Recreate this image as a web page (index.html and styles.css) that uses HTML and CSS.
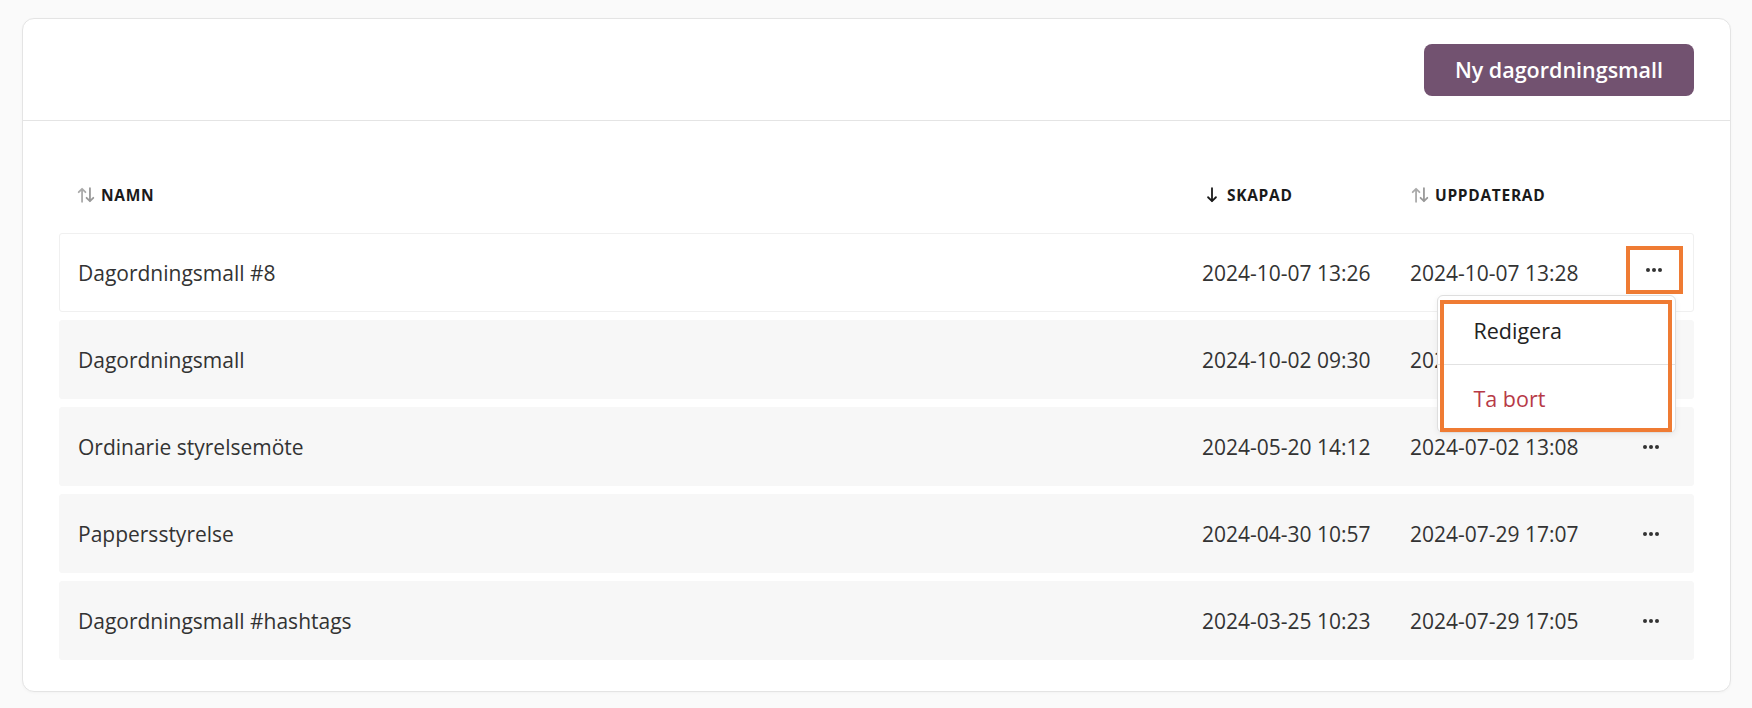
FILE: index.html
```html
<!DOCTYPE html>
<html lang="sv">
<head>
  <meta charset="UTF-8">
  <meta name="viewport" content="width=device-width, initial-scale=1">
  <title>Dagordningsmallar</title>
  <link rel="stylesheet" href="styles.css">
</head>
<body>
  <div class="card">
    <div class="card-header">
      <button class="primary">Ny dagordningsmall</button>
    </div>
    <div class="table">
      <div class="thead">
        <div class="th">
          <svg class="sort" viewBox="0 0 16 16"><path d="M4.5 14V2.5M1.5 5.5l3-3 3 3" stroke="#aaa"/><path d="M11.5 2v11.5M8.5 10.5l3 3 3-3" stroke="#999"/></svg>
          Namn
        </div>
        <div class="th">
          <svg class="sort" viewBox="0 0 16 16"><path d="M8 2v11.5M4.5 10l3.5 3.5 3.5-3.5" stroke="#1a1a1a"/></svg>
          Skapad
        </div>
        <div class="th">
          <svg class="sort" viewBox="0 0 16 16"><path d="M4.5 14V2.5M1.5 5.5l3-3 3 3" stroke="#aaa"/><path d="M11.5 2v11.5M8.5 10.5l3 3 3-3" stroke="#999"/></svg>
          Uppdaterad
        </div>
        <div></div>
      </div>

      <div class="row active">
        <div>Dagordningsmall #8</div>
        <div>2024-10-07 13:26</div>
        <div>2024-10-07 13:28</div>
        <div class="actions">
          <div class="menu-wrap">
            <button class="dots highlight"><span></span><span></span><span></span></button>
            <div class="menu">
              <div class="menu-item">Redigera</div>
              <div class="menu-item danger">Ta bort</div>
              <div class="menu-highlight"></div>
            </div>
          </div>
        </div>
      </div>

      <div class="row">
        <div>Dagordningsmall</div>
        <div>2024-10-02 09:30</div>
        <div>2024-10-02 09:31</div>
        <div class="actions"><button class="dots"><span></span><span></span><span></span></button></div>
      </div>

      <div class="row">
        <div>Ordinarie styrelsemöte</div>
        <div>2024-05-20 14:12</div>
        <div>2024-07-02 13:08</div>
        <div class="actions"><button class="dots"><span></span><span></span><span></span></button></div>
      </div>

      <div class="row">
        <div>Pappersstyrelse</div>
        <div>2024-04-30 10:57</div>
        <div>2024-07-29 17:07</div>
        <div class="actions"><button class="dots"><span></span><span></span><span></span></button></div>
      </div>

      <div class="row">
        <div>Dagordningsmall #hashtags</div>
        <div>2024-03-25 10:23</div>
        <div>2024-07-29 17:05</div>
        <div class="actions"><button class="dots"><span></span><span></span><span></span></button></div>
      </div>
    </div>
  </div>
</body>
</html>
```

FILE: styles.css
```css
* {
  box-sizing: border-box;
}

body {
  margin: 0;
  padding: 18px 21px 17px 22px;
  background-color: #fafafa;
  font-family: "Open Sans", Lato, sans-serif;
  color: #333;
}

.card {
  background: #fff;
  border: 1px solid #e4e4e4;
  border-radius: 12px;
  box-shadow: 0 1px 3px rgba(0, 0, 0, 0.03);
}

.card-header {
  display: flex;
  justify-content: flex-end;
  align-items: center;
  height: 102px;
  padding: 0 36px;
  border-bottom: 1px solid #e4e4e4;
}

.primary {
  width: 270px;
  height: 52px;
  border: none;
  border-radius: 8px;
  background-color: #725270;
  color: #fff;
  font-family: inherit;
  font-size: 21.5px;
  font-weight: 600;
  cursor: pointer;
}

.table {
  padding: 54px 36px 31px;
}

.thead,
.row {
  display: grid;
  grid-template-columns: 1fr 208px 209px 64px;
  align-items: center;
  padding: 0 10px 0 18px;
}

.thead {
  height: 40px;
  margin-bottom: 18px;
}

.th {
  display: flex;
  align-items: center;
  gap: 6px;
  font-size: 15.5px;
  font-weight: 700;
  text-transform: uppercase;
  letter-spacing: 0.7px;
  color: #1a1a1a;
}

.sort {
  width: 18px;
  height: 18px;
  fill: none;
  stroke-width: 1.6;
  stroke-linecap: round;
  stroke-linejoin: round;
}

.row {
  height: 79px;
  margin-bottom: 8px;
  background: #f7f7f7;
  border: 1px solid #f7f7f7;
  border-radius: 3px;
  font-size: 21px;
}

.row:last-child {
  margin-bottom: 0;
}

.row.active {
  background: #fff;
  border-color: #f0f0f0;
}

.actions {
  display: flex;
  justify-content: center;
}

.menu-wrap {
  position: relative;
  margin: 0 0 5px 6px;
}

.dots {
  display: flex;
  justify-content: center;
  align-items: center;
  gap: 2px;
  width: 49px;
  height: 40px;
  padding: 0;
  border: none;
  background: transparent;
  cursor: pointer;
}

.dots span {
  width: 4px;
  height: 4px;
  border-radius: 50%;
  background: #333;
}

.highlight {
  outline: 4px solid #ef7b33;
}

.menu {
  position: absolute;
  top: calc(100% + 5px);
  right: 3px;
  width: 239px;
  background: #fff;
  border: 1px solid #dedede;
  border-radius: 6px;
  box-shadow: 0 2px 6px rgba(0, 0, 0, 0.06);
  z-index: 2;
}

.menu-item {
  height: 68px;
  padding-left: 36px;
  display: flex;
  align-items: center;
  font-size: 21.5px;
  color: #222;
}

.menu-item + .menu-item {
  border-top: 1px solid #e2e2e2;
}

.menu-item.danger {
  color: #b73a47;
}

.menu-highlight {
  position: absolute;
  top: 4px;
  left: 2px;
  right: 3px;
  bottom: 0;
  border: 4px solid #ef7b33;
  pointer-events: none;
}
```
